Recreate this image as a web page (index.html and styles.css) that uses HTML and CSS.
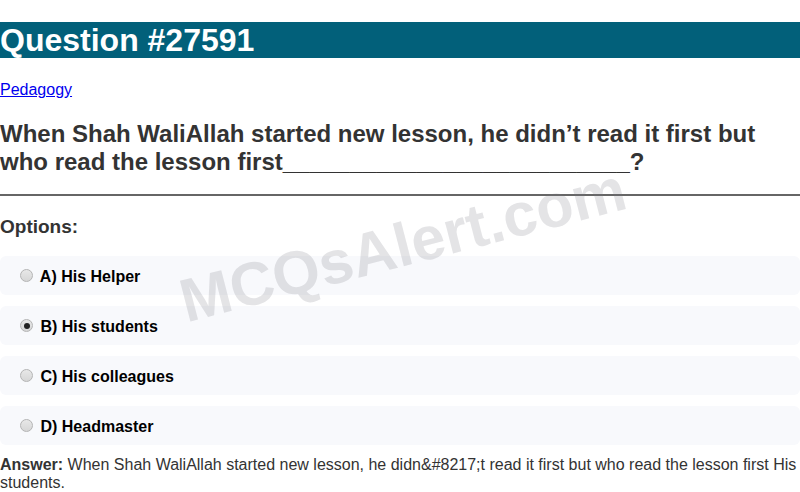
FILE: index.html
```html
<!DOCTYPE html>
<html>
<head>
<meta charset="utf-8">
<link rel="stylesheet" href="styles.css">
</head>
<body>
<div class="watermark">MCQsAlert.com</div>
<h1 class="title">Question #27591</h1>
<p class="cat"><a href="#">Pedagogy</a></p>
<h2 class="question">When Shah WaliAllah started new lesson, he didn’t read it first but who read the lesson first__________________________?</h2>
<hr class="sep">
<h3 class="opt-head">Options:</h3>
<div class="options">
  <label class="option"><input type="radio" name="o" disabled> A) His Helper</label>
  <label class="option"><input type="radio" name="o" disabled checked> B) His students</label>
  <label class="option"><input type="radio" name="o" disabled> C) His colleagues</label>
  <label class="option"><input type="radio" name="o" disabled> D) Headmaster</label>
</div>
<p class="answer"><strong>Answer:</strong> When Shah WaliAllah started new lesson, he didn&amp;#8217;t read it first but who read the lesson first His students.</p>
</body>
</html>
```
FILE: styles.css
```css
html, body {
  margin: 0;
  padding: 0;
}
body {
  font-family: "Liberation Sans", Arial, sans-serif;
  font-size: 16px;
  color: #000;
  background: #fff;
  position: relative;
  overflow: hidden;
}
.title {
  margin: 22px 0 0;
  background: #02607a;
  color: #fff;
  font-size: 32px;
  line-height: 36px;
  font-weight: bold;
}
.cat {
  margin: 23px 0 0;
  line-height: 18px;
}
.cat a {
  color: #0000ee;
}
.question {
  color: #333;
  font-size: 24px;
  line-height: 28px;
  margin: 21px 0 0;
}
.sep {
  margin: 18px 0 0;
  border: 0;
  border-top: 2px solid #666;
  height: 0;
}
.opt-head {
  color: #333;
  font-size: 19px;
  line-height: 22px;
  margin: 20px 0 0;
}
.options {
  margin-top: 18px;
  display: flex;
  flex-direction: column;
  gap: 11px;
}
.option {
  display: block;
  background: #f8f9fc;
  border-radius: 6px;
  padding: 11px 15px 9px;
  height: 19px;
  font-weight: bold;
  line-height: 19px;
}
.option input {
  -webkit-appearance: none;
  appearance: none;
  box-sizing: border-box;
  width: 13px;
  height: 13px;
  margin: 2px 3px 0 5px;
  vertical-align: top;
  border-radius: 50%;
  border: 1px solid #b4b4b4;
  background: linear-gradient(#e8e8e8, #d6d6d6);
  position: relative;
}
.option input:checked::after {
  content: "";
  position: absolute;
  left: 2.5px;
  top: 2.5px;
  width: 6px;
  height: 6px;
  border-radius: 50%;
  background: #222;
}
.answer {
  color: #333;
  font-size: 16px;
  line-height: 18px;
  margin: 11px 0 0;
}
.answer strong {
  color: #333;
}
.watermark {
  position: absolute;
  left: 190px;
  top: 266px;
  font-size: 61px;
  font-weight: bold;
  color: rgba(120, 120, 130, 0.2);
  transform: rotate(-14.5deg);
  transform-origin: 0 100%;
  pointer-events: none;
  z-index: 5;
  white-space: nowrap;
}
```
